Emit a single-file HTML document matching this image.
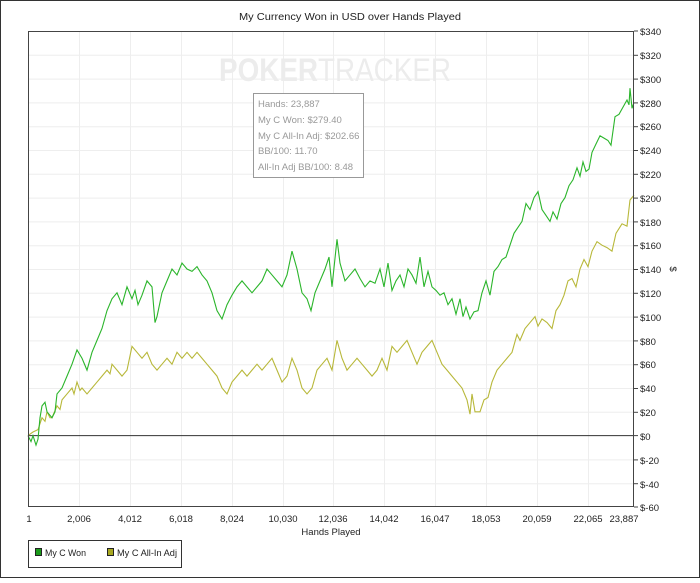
<!DOCTYPE html><html><head><style>
body{margin:0;width:700px;height:578px;background:#fff;font-family:"Liberation Sans",sans-serif;overflow:hidden}
</style></head><body>
<svg width="700" height="578" xmlns="http://www.w3.org/2000/svg" font-family="Liberation Sans, sans-serif" font-size="10">
<rect x="0.5" y="0.5" width="699" height="577" fill="#fff" stroke="#333"/>
<text x="350" y="20" text-anchor="middle" fill="#222" font-size="10" textLength="222" lengthAdjust="spacingAndGlyphs">My Currency Won in USD over Hands Played</text>
<g stroke="#eee" stroke-width="1">
<line x1="79.5" y1="31" x2="79.5" y2="507"/><line x1="130.5" y1="31" x2="130.5" y2="507"/><line x1="181.5" y1="31" x2="181.5" y2="507"/><line x1="232.5" y1="31" x2="232.5" y2="507"/><line x1="283.5" y1="31" x2="283.5" y2="507"/><line x1="333.5" y1="31" x2="333.5" y2="507"/><line x1="384.5" y1="31" x2="384.5" y2="507"/><line x1="435.5" y1="31" x2="435.5" y2="507"/><line x1="486.5" y1="31" x2="486.5" y2="507"/><line x1="537.5" y1="31" x2="537.5" y2="507"/><line x1="588.5" y1="31" x2="588.5" y2="507"/>
<line x1="28" y1="55.3" x2="634" y2="55.3"/><line x1="28" y1="79.1" x2="634" y2="79.1"/><line x1="28" y1="102.9" x2="634" y2="102.9"/><line x1="28" y1="126.7" x2="634" y2="126.7"/><line x1="28" y1="150.5" x2="634" y2="150.5"/><line x1="28" y1="174.3" x2="634" y2="174.3"/><line x1="28" y1="198.1" x2="634" y2="198.1"/><line x1="28" y1="221.9" x2="634" y2="221.9"/><line x1="28" y1="245.7" x2="634" y2="245.7"/><line x1="28" y1="269.5" x2="634" y2="269.5"/><line x1="28" y1="293.3" x2="634" y2="293.3"/><line x1="28" y1="317.1" x2="634" y2="317.1"/><line x1="28" y1="340.9" x2="634" y2="340.9"/><line x1="28" y1="364.7" x2="634" y2="364.7"/><line x1="28" y1="388.5" x2="634" y2="388.5"/><line x1="28" y1="412.3" x2="634" y2="412.3"/><line x1="28" y1="459.9" x2="634" y2="459.9"/><line x1="28" y1="483.7" x2="634" y2="483.7"/>
</g>
<text x="335" y="81" text-anchor="middle" font-size="32" fill="#ececec" font-weight="bold" textLength="232" lengthAdjust="spacingAndGlyphs">POKER<tspan font-weight="normal">TRACKER</tspan></text>
<line x1="28" y1="435.6" x2="634" y2="435.6" stroke="#333"/>
<g transform="translate(0,435.6) scale(1,-1.19)" fill="none" stroke-width="1.1">
<polyline vector-effect="non-scaling-stroke" stroke="#b8b83a" points="28,0 33,3 38,5 42,15 45,12 47,20 50,15 52,15 57,25 60,22 62,30 67,35 72,40 74,35 77,45 80,38 82,40 87,35 92,40 97,45 102,50 107,55 110,52 112,60 117,55 122,50 127,55 132,75 137,70 142,65 147,70 152,60 157,55 162,60 167,65 172,60 177,70 182,65 187,70 192,65 197,70 202,65 207,60 212,55 217,50 222,40 227,35 232,45 237,50 242,55 247,50 252,55 257,60 262,55 267,60 272,65 277,55 282,45 287,50 292,65 297,55 302,40 307,35 312,40 317,55 322,60 327,65 332,55 337,80 342,65 347,55 352,60 357,65 362,60 367,55 372,50 377,55 382,65 387,55 392,75 397,70 402,75 407,80 412,70 417,60 422,70 427,75 432,80 437,70 442,60 447,55 452,50 457,45 462,40 467,30 470,18 472,35 475,20 480,20 484,30 488,32 492,45 497,55 502,60 507,65 512,70 517,85 520,80 525,90 530,95 535,100 538,92 542,98 547,95 552,90 556,105 560,110 564,118 568,130 572,132 576,125 580,140 584,148 588,142 592,155 597,163 602,160 607,158 612,155 616,170 622,178 627,176 630,198 634,202"/>
<polyline vector-effect="non-scaling-stroke" stroke="#2bb52b" points="28,0 31,-5 33,0 36,-8 38,-3 40,15 42,25 45,28 47,20 52,15 55,20 57,35 62,40 67,50 72,60 77,72 82,65 87,55 92,70 97,80 102,90 107,105 112,115 117,120 122,110 127,125 132,115 135,122 138,110 142,118 147,130 152,125 155,95 157,100 162,120 167,130 172,140 177,135 182,145 187,140 192,138 197,142 202,135 207,130 212,120 217,105 222,98 227,110 232,118 237,125 242,130 247,125 252,120 257,125 262,130 267,140 272,135 277,130 282,125 287,135 292,155 297,140 302,120 307,115 311,105 315,120 320,130 325,140 329,150 332,125 337,165 340,145 345,130 350,135 355,140 360,132 365,125 370,130 375,128 380,140 384,125 388,145 392,122 396,130 400,135 404,125 408,140 412,135 416,128 420,150 424,125 428,138 432,125 436,122 440,118 444,120 448,110 452,115 456,102 460,115 463,100 466,108 470,98 474,104 478,105 482,120 486,130 490,118 494,138 498,142 502,148 506,150 510,160 514,170 518,175 522,180 526,195 530,190 534,200 538,205 542,190 546,185 550,180 553,188 557,182 561,195 565,200 569,210 573,215 577,225 580,218 583,230 586,222 589,224 592,238 596,245 600,252 604,250 608,248 611,244 615,268 619,270 623,276 627,282 629,278 630,292 632,275 634,280"/>
</g>
<rect x="28.5" y="31.5" width="605" height="475" fill="none" stroke="#444"/>
<g stroke="#444"><line x1="634" y1="31" x2="638" y2="31"/><line x1="634" y1="55.3" x2="638" y2="55.3"/><line x1="634" y1="79.1" x2="638" y2="79.1"/><line x1="634" y1="102.9" x2="638" y2="102.9"/><line x1="634" y1="126.7" x2="638" y2="126.7"/><line x1="634" y1="150.5" x2="638" y2="150.5"/><line x1="634" y1="174.3" x2="638" y2="174.3"/><line x1="634" y1="198.1" x2="638" y2="198.1"/><line x1="634" y1="221.9" x2="638" y2="221.9"/><line x1="634" y1="245.7" x2="638" y2="245.7"/><line x1="634" y1="269.5" x2="638" y2="269.5"/><line x1="634" y1="293.3" x2="638" y2="293.3"/><line x1="634" y1="317.1" x2="638" y2="317.1"/><line x1="634" y1="340.9" x2="638" y2="340.9"/><line x1="634" y1="364.7" x2="638" y2="364.7"/><line x1="634" y1="388.5" x2="638" y2="388.5"/><line x1="634" y1="412.3" x2="638" y2="412.3"/><line x1="634" y1="435.6" x2="638" y2="435.6"/><line x1="634" y1="459.9" x2="638" y2="459.9"/><line x1="634" y1="483.7" x2="638" y2="483.7"/><line x1="634" y1="507" x2="638" y2="507"/></g>
<g fill="#222" font-size="9.5">
<text x="640" y="35">$340</text><text x="640" y="59">$320</text><text x="640" y="83">$300</text><text x="640" y="107">$280</text><text x="640" y="130">$260</text><text x="640" y="154">$240</text><text x="640" y="178">$220</text><text x="640" y="202">$200</text><text x="640" y="226">$180</text><text x="640" y="249">$160</text><text x="640" y="273">$140</text><text x="640" y="297">$120</text><text x="640" y="321">$100</text><text x="640" y="345">$80</text><text x="640" y="368">$60</text><text x="640" y="392">$40</text><text x="640" y="416">$20</text><text x="640" y="440">$0</text><text x="640" y="464">$-20</text><text x="640" y="488">$-40</text><text x="640" y="511">$-60</text>
<text x="0" y="0" transform="translate(670,269) rotate(90)" text-anchor="middle">$</text>
</g>
<g fill="#222" font-size="9.5" text-anchor="middle">
<text x="29" y="522">1</text><text x="79" y="522">2,006</text><text x="130" y="522">4,012</text><text x="181" y="522">6,018</text><text x="232" y="522">8,024</text><text x="283" y="522">10,030</text><text x="333" y="522">12,036</text><text x="384" y="522">14,042</text><text x="435" y="522">16,047</text><text x="486" y="522">18,053</text><text x="537" y="522">20,059</text><text x="588" y="522">22,065</text><text x="624" y="522">23,887</text>
<text x="331" y="535">Hands Played</text>
</g>
<rect x="253.5" y="93.5" width="110" height="84" fill="#fff" stroke="#999"/>
<g fill="#999" font-size="9.5"><text x="258" y="107">Hands: 23,887</text><text x="258" y="123">My C Won: $279.40</text><text x="258" y="139">My C All-In Adj: $202.66</text><text x="258" y="154">BB/100: 11.70</text><text x="258" y="170">All-In Adj BB/100: 8.48</text></g>
<rect x="28.5" y="540.5" width="153" height="27" fill="#fff" stroke="#333"/>
<rect x="35.5" y="548.5" width="6" height="7" fill="#1a9a1a" stroke="#222"/>
<text x="45" y="556" font-size="9.5" fill="#222" textLength="41" lengthAdjust="spacingAndGlyphs">My C Won</text>
<rect x="107.5" y="548.5" width="6" height="7" fill="#a8a820" stroke="#222"/>
<text x="117" y="556" font-size="9.5" fill="#222" textLength="60" lengthAdjust="spacingAndGlyphs">My C All-In Adj</text>
</svg>
</body></html>
